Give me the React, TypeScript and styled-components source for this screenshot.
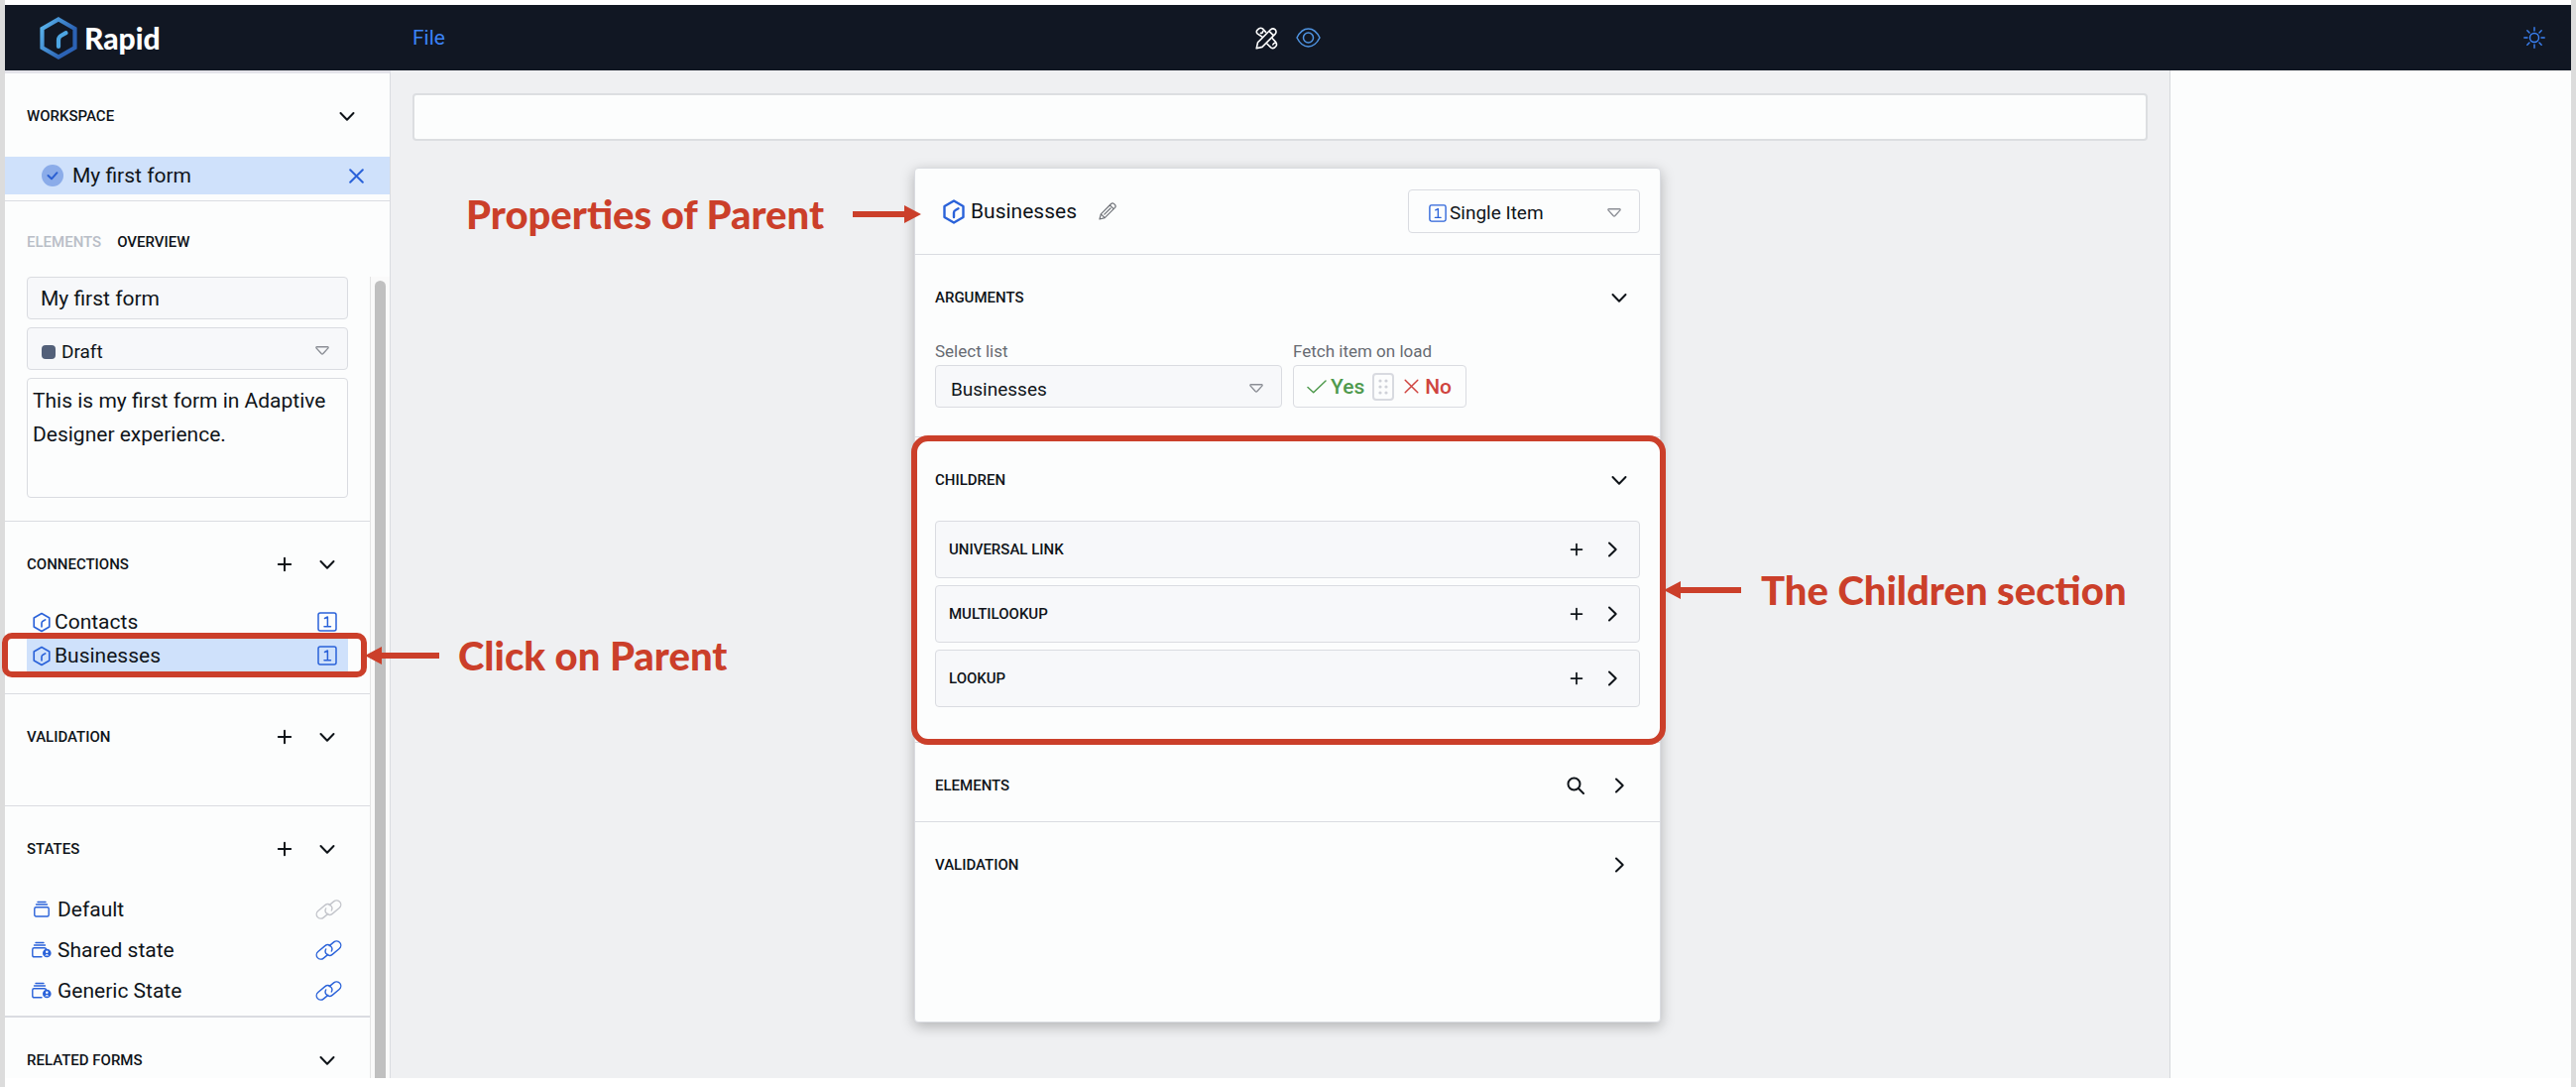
import React, { useId, useState } from 'react';
import styled, { createGlobalStyle } from 'styled-components';

const color = {
  ink: '#0f1419',
  muted: '#676b72',
  faint: '#b9bec7',
  line: '#dadce1',
  surface: '#fcfdfd',
  field: '#f7f8fa',
  canvas: '#eff0f2',
  selected: '#cfe1fb',
  blue: '#2a62d9',
  bar: '#111723',
  mark: '#cb3f2a',
  yes: '#4f9a4d',
  no: '#cf4440',
};

const GlobalStyle = createGlobalStyle`
  *, *::before, *::after { box-sizing: border-box; }
  body {
    margin: 0;
    color: ${color.ink};
    font-family: Roboto, "Liberation Sans", sans-serif;
    font-size: 21px;
    line-height: 34px;
  }
  button, input, select, textarea {
    font: inherit;
    color: inherit;
  }
`;

/* ---------- layout ---------- */

const Frame = styled.div`
  height: 100vh;
  display: flex;
  flex-direction: column;
  padding: 5px 5px 9px;
  overflow: hidden;
  background: #fff;
  box-shadow: inset 5px 0 #dcdcdc, inset -5px 0 #dcdcdc;
`;

const columns = '389px minmax(0, 1fr) 405px';

const TopBar = styled.header`
  flex: none;
  height: 66px;
  display: grid;
  grid-template-columns: ${columns};
  align-items: center;
  background: ${color.bar};
`;

const Brand = styled.a`
  display: flex;
  align-items: center;
  gap: 7px;
  padding-left: 35px;
  color: #fff;
  text-decoration: none;
  font: 900 30px/40px Lato, sans-serif;
`;

const BarCenter = styled.div`
  display: grid;
  grid-template-columns: 1fr auto 1fr;
  align-items: center;
  padding-left: 15px;
`;

const MenuButton = styled.button`
  justify-self: start;
  margin-left: 7px;
  padding: 0;
  border: 0;
  background: none;
  color: #3b82f6;
  cursor: pointer;
`;

const ModeSwitch = styled.div`
  display: flex;
  align-items: center;
  gap: 18px;
`;

const BarEnd = styled.div`
  display: flex;
  justify-content: flex-end;
  padding-right: 26px;
`;

const IconButton = styled.button<{ $tone?: string }>`
  display: inline-flex;
  align-items: center;
  justify-content: center;
  min-width: 16px;
  padding: 0;
  border: 0;
  background: none;
  color: ${p => p.$tone ?? color.ink};
  cursor: pointer;
`;

const Body = styled.div`
  flex: 1;
  min-height: 0;
  display: grid;
  grid-template-columns: ${columns};
`;

const Sidebar = styled.aside`
  position: relative;
  z-index: 2;
  min-height: 0;
  display: flex;
  flex-direction: column;
  background: ${color.surface};
  border-top: 3px solid #e4e4ea;
  border-right: 1px solid ${color.line};
`;

const SidebarScroll = styled.div`
  flex: 1;
  min-height: 0;
  display: flex;
`;

const SidebarContent = styled.div`
  flex: 1;
  min-width: 0;
`;

const Track = styled.div`
  width: 20px;
  padding: 4px 4px 0;
  background: #fafafa;
  border-left: 1px solid #e4e4e4;
`;

const Thumb = styled.div`
  width: 11px;
  height: 100%;
  border-radius: 6px 6px 0 0;
  background: #c0c0c0;
`;

const Canvas = styled.main`
  min-width: 0;
  display: flex;
  flex-direction: column;
  padding: 23px 22px 56px;
  background: ${color.canvas};
`;

const PathField = styled.input`
  flex: none;
  width: 100%;
  height: 48px;
  padding: 0 12px;
  background: ${color.surface};
  border: 2px solid #dcdee1;
  border-radius: 4px;
`;

const Stage = styled.div`
  flex: 1;
  display: flex;
  justify-content: center;
  padding: 27px 0 0 15px;
`;

const SidePanel = styled.aside`
  background: ${color.surface};
  border-left: 1px solid #d6d8dc;
`;

/* ---------- sections ---------- */

const Section = styled.section<{ $end?: number; $rule?: number }>`
  position: relative;
  padding-bottom: ${p => p.$end ?? 0}px;
  border-bottom: ${p => p.$rule ?? 1}px solid ${color.line};
`;

const SectionHead = styled.div<{ $card?: boolean; $compact?: boolean }>`
  display: flex;
  align-items: center;
  gap: 27px;
  height: ${p => (p.$compact ? 79 : 84)}px;
  padding: ${p => (p.$compact ? 7 : 1)}px ${p => (p.$card ? '33px 0 20px' : '35px 0 22px')};
`;

const Caption = styled.h2`
  flex: 1;
  margin: 0;
  font-size: 15px;
  line-height: 20px;
  font-weight: 500;
`;

const Tabs = styled.div`
  display: flex;
  align-items: center;
  gap: 16px;
  height: 76px;
  padding: 5px 22px 0;
`;

const Tab = styled.button<{ $active?: boolean }>`
  padding: 0;
  border: 0;
  background: none;
  font-size: 15px;
  line-height: 20px;
  font-weight: 500;
  color: ${p => (p.$active ? color.ink : color.faint)};
  cursor: pointer;
`;

const FormRow = styled.div`
  display: flex;
  align-items: center;
  gap: 9px;
  height: 38px;
  margin-bottom: 6px;
  padding: 0 26px 0 37px;
  background: ${color.selected};
`;

const Grow = styled.span`
  flex: 1;
`;

const Fields = styled.div`
  display: flex;
  flex-direction: column;
  gap: 8px;
  padding: 0 22px;
`;

const TextField = styled.input`
  width: 100%;
  height: 43px;
  padding: 0 13px;
  background: ${color.field};
  border: 1px solid ${color.line};
  border-radius: 4px;
`;

const TextArea = styled.textarea`
  display: block;
  width: 100%;
  height: 121px;
  padding: 5px;
  resize: none;
  overflow: hidden;
  background: ${color.surface};
  border: 1px solid ${color.line};
  border-radius: 4px;
`;

const List = styled.ul`
  margin: 0;
  padding: 0 22px;
  list-style: none;
`;

const ConnectionItem = styled.li<{ $selected?: boolean }>`
  position: relative;
  display: flex;
  align-items: center;
  gap: 4px;
  height: 34px;
  padding: 0 11px 0 6px;
  background: ${p => (p.$selected ? color.selected : 'none')};
`;

const StateItem = styled.li`
  display: flex;
  align-items: center;
  gap: 6px;
  height: 40px;
  margin-bottom: 1px;
  padding: 0 6px 0 5px;
`;

/* ---------- select ---------- */

const SelectShell = styled.div`
  display: grid;
  align-items: center;
  & > * { grid-area: 1 / 1; }
`;

const SelectControl = styled.select<{ $start: number; $plain?: boolean }>`
  appearance: none;
  width: 100%;
  height: ${p => (p.$plain ? 44 : 43)}px;
  padding: ${p => (p.$plain ? 4 : 7)}px 40px 0 ${p => p.$start}px;
  font-size: 19px;
  line-height: 28px;
  background: ${p => (p.$plain ? color.surface : color.field)};
  border: 1px solid ${color.line};
  border-radius: 4px;
`;

const Lead = styled.span`
  z-index: 1;
  display: flex;
  justify-self: start;
  padding: 6px 0 0 15px;
  pointer-events: none;
`;

const LeadWide = styled(Lead)`
  padding: 4px 0 0 21px;
`;

const Trail = styled.span`
  z-index: 1;
  display: flex;
  justify-self: end;
  padding: 3px 19px 0 0;
  pointer-events: none;
`;

const Swatch = styled.span`
  width: 14px;
  height: 14px;
  border-radius: 4px;
  background: #536079;
`;

/* ---------- card ---------- */

const Card = styled.section`
  position: relative;
  width: 100%;
  max-width: 753px;
  background: ${color.surface};
  border: 1px solid ${color.line};
  border-radius: 4px;
  box-shadow: 0 4px 14px rgba(0, 0, 0, 0.26);
`;

const CardHead = styled.header`
  position: relative;
  display: flex;
  align-items: center;
  gap: 22px;
  height: 87px;
  padding: 0 20px 0 28px;
  border-bottom: 1px solid ${color.line};
`;

const CardTitle = styled.h1`
  display: flex;
  align-items: center;
  gap: 6px;
  margin: 0;
  font-size: 21px;
  font-weight: 400;
`;

const TypePicker = styled.div`
  width: 234px;
  margin-left: auto;
`;

const ArgumentGrid = styled.div`
  display: grid;
  grid-template-columns: 350px 175px;
  gap: 11px;
  padding: 0 20px;
`;

const Label = styled.label`
  display: block;
  font-size: 17px;
  line-height: 27px;
  color: ${color.muted};
`;

const Toggle = styled.div`
  display: flex;
  align-items: center;
  height: 43px;
  padding: 0 13px;
  border: 1px solid ${color.line};
  border-radius: 4px;
`;

const Choice = styled.label<{ $tone: string; $gap: number }>`
  display: flex;
  align-items: center;
  gap: ${p => p.$gap}px;
  color: ${p => p.$tone};
  cursor: pointer;
`;

const ChoiceText = styled.span`
  font-weight: 500;
`;

const HiddenRadio = styled.input`
  appearance: none;
  width: 0;
  height: 0;
  margin: 0 -4px 0 0;
`;

const Handle = styled.span`
  display: flex;
  align-items: center;
  justify-content: center;
  width: 22px;
  height: 28px;
  margin: 0 8px;
  border: 2px solid #d8dae0;
  border-radius: 4px;
`;

const ChildList = styled.div`
  display: grid;
  gap: 7px;
  padding: 0 20px;
`;

const ChildRow = styled.div`
  display: flex;
  align-items: center;
  gap: 20px;
  height: 58px;
  padding: 0 19px 0 13px;
  background: ${color.field};
  border: 1px solid ${color.line};
  border-radius: 4px;
`;

/* ---------- annotations laid over the page ---------- */

const Outline = styled.div<{ $inset: string; $radius: number }>`
  position: absolute;
  z-index: 3;
  inset: ${p => p.$inset};
  border: 6px solid ${color.mark};
  border-radius: ${p => p.$radius}px;
  pointer-events: none;
`;

const Note = styled.div<{ $side: 'before' | 'after'; $edge: number; $top: string; $gap: number }>`
  position: absolute;
  z-index: 3;
  top: ${p => p.$top};
  ${p => (p.$side === 'before' ? 'right' : 'left')}: calc(100% + ${p => p.$edge}px);
  display: flex;
  align-items: center;
  gap: ${p => p.$gap}px;
  height: 48px;
  white-space: nowrap;
  color: ${color.mark};
  font: 900 40px/46px Lato, sans-serif;
  pointer-events: none;
`;

/* ---------- icons ---------- */

const Arrow = ({ length, left }: { length: number; left?: boolean }) => (
  <svg width={length} height="18" viewBox={`0 0 ${length} 18`} fill="currentColor" aria-hidden="true">
    {left ? (
      <path d={`M0 9 17 0V6H${length}V12H17V18Z`} />
    ) : (
      <path d={`M${length} 9 ${length - 17} 0V6H0V12H${length - 17}V18Z`} />
    )}
  </svg>
);

const stroke = (w: number) => ({
  fill: 'none',
  stroke: 'currentColor',
  strokeWidth: w,
  strokeLinecap: 'round' as const,
  strokeLinejoin: 'round' as const,
  'aria-hidden': true,
});

const ChevronDown = () => (
  <svg width="16" height="16" viewBox="0 0 16 16" {...stroke(2)}>
    <path d="M1.5 5 8 11.7 14.500 5" />
  </svg>
);
const ChevronRight = () => (
  <svg width="16" height="16" viewBox="0 0 16 16" {...stroke(2)}>
    <path d="M5 1.500 11.700 8 5 14.500" />
  </svg>
);
const Plus = ({ size = 16 }: { size?: number }) => (
  <svg width={size} height={size} viewBox="0 0 16 16" {...stroke(2)}>
    <path d="M8 1.800V14.200M1.800 8H14.200" />
  </svg>
);
const Search = () => (
  <svg width="18" height="18" viewBox="0 0 18 18" {...stroke(2)}>
    <circle cx="7.500" cy="7.500" r="6" />
    <path d="M12 12 17 17" />
  </svg>
);
const Close = ({ w = 2 }: { w?: number }) => (
  <svg width="15" height="15" viewBox="0 0 15 15" {...stroke(w)}>
    <path d="M1.200 1.200 13.800 13.800M13.800 1.200 1.200 13.800" />
  </svg>
);
const CheckLine = () => (
  <svg width="20" height="14" viewBox="0 0 20 14" {...stroke(1.5)}>
    <path d="M1 7.500 6.700 12.800 19 1" />
  </svg>
);
const CheckCircle = () => (
  <svg width="22" height="22" viewBox="0 0 22 22" aria-hidden="true">
    <circle cx="11" cy="11" r="11" fill="#8bace9" />
    <path d="M6.500 11 10 14.300 15.500 8.200" {...stroke(2)} stroke="#2a5fd2" />
  </svg>
);
const Caret = () => (
  <svg width="14" height="9" viewBox="0 0 14 9" {...stroke(1.4)} stroke="#8b8e95">
    <path d="M1.700 .8H12.300Q13.600 1 12.800 2.100L7.900 7.500Q7 8.400 6.100 7.500L1.200 2.100Q.4 1 1.700 .8Z" />
  </svg>
);
const HexMark = ({ size, w = 2.4 }: { size: number; w?: number }) => (
  <svg width={size} height={Math.round(size * 1.14)} viewBox="0 0 22 25" {...stroke(w)} stroke={color.blue}>
    <path d="M11 1.500 20.500 7V18L11 23.500 1.500 18V7Z" />
    <path d="M11 18V13.500Q11 11.800 12.500 11L15.500 9.300" />
  </svg>
);
const BrandMark = () => (
  <svg width="38" height="43" viewBox="0 0 38 43" aria-hidden="true">
    <defs>
      <linearGradient id="brand" x1="0" y1="0" x2="1" y2="0.600">
        <stop offset="0" stopColor="#5cb8ee" />
        <stop offset="0.850" stopColor="#2b62b4" />
      </linearGradient>
    </defs>
    <path d="M19 2.500 35.500 12V31L19 40.500 2.500 31V12Z" fill="none" stroke="url(#brand)" strokeWidth="4.200" />
    <path d="M19 30V23.500Q19 20.500 21.500 19L26.500 16.200" fill="none" stroke="#4da6e3" strokeWidth="4.200" strokeLinecap="round" />
  </svg>
);
const OneBox = ({ size }: { size: number }) => (
  <svg width={size} height={size} viewBox="0 0 20 20" {...stroke(1.5)} stroke={color.blue}>
    <rect x="1" y="1" width="18" height="18" rx="2" />
    <path d="M7.500 6.500 10.400 5V14.800M7 14.800H13.500" />
  </svg>
);
const DesignTools = () => (
  <svg width="23" height="23" viewBox="0 0 23 23" {...stroke(1.6)}>
    <path d="M1.200 21.800 2.500 15.800 15.500 2.800Q17.800 .8 20.100 2.800 22 5.100 20 7.400L7 20.400ZM14 4.400 18.500 8.900" />
    <path d="M7 10.200 2 6.800Q.6 5 2 3.300L3.600 1.900Q5.500 .6 7.400 1.900L10.600 5.400M5.500 6.400Q7.600 6.600 7.600 4.600" />
    <path d="M17.300 11.800 20.800 15.600Q22.200 17.600 20.900 19.500L19.500 21Q17.600 22.300 15.700 20.900L12 17.200M21 16.400Q18.800 15.900 17.800 18" />
  </svg>
);
const Eye = () => (
  <svg width="25" height="20" viewBox="0 0 25 20" {...stroke(1.5)} stroke="#4f94e2">
    <path d="M1 10Q5.500 1 12.500 1T24 10Q19.500 19 12.500 19T1 10Z" />
    <circle cx="12.500" cy="10" r="5" />
  </svg>
);
const Sun = () => (
  <svg width="22" height="22" viewBox="0 0 22 22" {...stroke(1.4)}>
    <circle cx="11" cy="11" r="4.500" />
    <path d="M11 .8V4M11 18V21.200M.8 11H4M18 11H21.200M3.800 3.800 6 6M16 16 18.200 18.200M18.200 3.800 16 6M6 16 3.800 18.200" />
  </svg>
);
const Pencil = () => (
  <svg width="18" height="18" viewBox="0 0 18 18" {...stroke(1.2)}>
    <path d="M1 17 2.300 11.800 12.600 1.500Q14 .3 15.400 1.400L16.600 2.600Q17.700 4 16.500 5.400L6.200 15.700ZM2.300 11.800 6.200 15.700M11.300 2.800 15.200 6.700M5.800 12.200 12 6" />
  </svg>
);
const Grip = () => (
  <svg width="10" height="16" viewBox="0 0 10 16" fill="#cfd1d8" aria-hidden="true">
    {[2, 8, 14].map(y => (
      <g key={y}>
        <circle cx="2" cy={y} r="1.600" />
        <circle cx="8" cy={y} r="1.600" />
      </g>
    ))}
  </svg>
);
const StackIcon = ({ shared }: { shared?: boolean }) => (
  <svg width="20" height="18" viewBox="0 0 20 18" {...stroke(1.4)} stroke={color.blue}>
    {shared ? (
      <>
        <path d="M4 1.500H12M2.500 4H13.500M10 15.800H2.300Q.8 15.800 .8 14.300V8.300Q.8 6.800 2.300 6.800H13Q14.200 6.800 14.500 7.800" />
        <circle cx="15.300" cy="12" r="4.300" fill={color.blue} stroke="none" />
        <circle cx="15.300" cy="10.800" r="1.300" fill="#fff" stroke="none" />
        <path d="M13.200 14.500Q15.300 11.500 17.400 14.500Z" fill="#fff" stroke="none" />
      </>
    ) : (
      <>
        <path d="M6 1.500H14M4.500 4H15.500" />
        <rect x="2.800" y="6.800" width="14.400" height="9.200" rx="1.500" />
      </>
    )}
  </svg>
);
const ChainIcon = () => (
  <svg width="27" height="20" viewBox="0 0 27 20" {...stroke(1.4)}>
    <g transform="translate(13.500 10) rotate(-40)">
      <path d="M-3.300 2.900H-9.200A4.300 4.300 0 0 1 -9.200 -5.700H0A4.300 4.300 0 0 1 1.500 2.600" />
      <path d="M3.300 -2.900H9.200A4.300 4.300 0 0 1 9.200 5.700H0A4.300 4.300 0 0 1 -1.500 -2.600" />
    </g>
  </svg>
);

/* ---------- parts ---------- */

type HeadProps = {
  title: string;
  open?: boolean;
  add?: boolean;
  search?: boolean;
  card?: boolean;
  compact?: boolean;
};

const Head = ({ title, open, add, search, card, compact }: HeadProps) => (
  <SectionHead $card={card} $compact={compact}>
    <Caption>{title}</Caption>
    {add && <IconButton aria-label={`Add to ${title}`}><Plus /></IconButton>}
    {search && <IconButton aria-label={`Search ${title}`}><Search /></IconButton>}
    <IconButton aria-label={`Toggle ${title}`} aria-expanded={!!open}>
      {open ? <ChevronDown /> : <ChevronRight />}
    </IconButton>
  </SectionHead>
);

const states = [
  { name: 'Default', shared: false },
  { name: 'Shared state', shared: true },
  { name: 'Generic State', shared: true },
];

const SidebarView = () => (
  <Sidebar>
    <Section>
      <Head title="WORKSPACE" open />
      <FormRow>
        <CheckCircle />
        <Grow>My first form</Grow>
        <IconButton $tone={color.blue} aria-label="Close My first form"><Close /></IconButton>
      </FormRow>
    </Section>
    <Tabs>
      <Tab>ELEMENTS</Tab>
      <Tab $active>OVERVIEW</Tab>
    </Tabs>
    <SidebarScroll>
      <SidebarContent>
        <Section $end={23}>
          <Fields>
            <TextField aria-label="Form name" defaultValue="My first form" />
            <SelectShell>
              <SelectControl $start={34} aria-label="Form status">
                <option>Draft</option>
              </SelectControl>
              <Lead><Swatch /></Lead>
              <Trail><Caret /></Trail>
            </SelectShell>
            <TextArea
              aria-label="Form description"
              defaultValue="This is my first form in Adaptive Designer experience."
            />
          </Fields>
        </Section>
        <Section $end={21}>
          <Head title="CONNECTIONS" open add />
          <List>
            <ConnectionItem>
              <HexMark size={18} w={2} />
              <Grow>Contacts</Grow>
              <OneBox size={20} />
            </ConnectionItem>
            <ConnectionItem $selected>
              <HexMark size={18} w={2} />
              <Grow>Businesses</Grow>
              <OneBox size={20} />
              <Outline $inset="-6px -19px -5px -25px" $radius={10} />
              <Note $side="after" $edge={17} $top="-7px" $gap={19}>
                <Arrow length={75} left />
                Click on Parent
              </Note>
            </ConnectionItem>
          </List>
        </Section>
        <Section $end={28}>
          <Head title="VALIDATION" open add />
        </Section>
        <Section $end={4} $rule={2}>
          <Head title="STATES" open add />
          <List>
            {states.map(s => (
              <StateItem key={s.name}>
                <StackIcon shared={s.shared} />
                <Grow>{s.name}</Grow>
                <IconButton $tone={s.shared ? color.blue : '#c3c5cb'} aria-label={`Link ${s.name}`}>
                  <ChainIcon />
                </IconButton>
              </StateItem>
            ))}
          </List>
        </Section>
        <Head title="RELATED FORMS" open />
      </SidebarContent>
      <Track><Thumb /></Track>
    </SidebarScroll>
  </Sidebar>
);

const FetchToggle = () => {
  const [fetch, setFetch] = useState(true);
  return (
    <Toggle role="radiogroup" aria-label="Fetch item on load">
      <Choice $tone={color.yes} $gap={4}>
        <HiddenRadio type="radio" name="fetch" checked={fetch} onChange={() => setFetch(true)} />
        <CheckLine />
        <ChoiceText>Yes</ChoiceText>
      </Choice>
      <Handle><Grip /></Handle>
      <Choice $tone={color.no} $gap={6}>
        <HiddenRadio type="radio" name="fetch" checked={!fetch} onChange={() => setFetch(false)} />
        <Close w={1.5} />
        <ChoiceText>No</ChoiceText>
      </Choice>
    </Toggle>
  );
};

const PropertiesCard = () => {
  const listId = useId();
  return (
    <Card>
      <CardHead>
        <CardTitle>
          <HexMark size={22} />
          Businesses
        </CardTitle>
        <IconButton $tone="#6f7278" aria-label="Rename"><Pencil /></IconButton>
        <TypePicker>
          <SelectShell>
            <SelectControl $start={41} $plain aria-label="Item type">
              <option>Single Item</option>
            </SelectControl>
            <LeadWide><OneBox size={18} /></LeadWide>
            <Trail><Caret /></Trail>
          </SelectShell>
        </TypePicker>
        <Note $side="before" $edge={-6} $top="22px" $gap={29}>
          Properties of Parent
          <Arrow length={69} />
        </Note>
      </CardHead>
      <Section $end={29}>
        <Head title="ARGUMENTS" open card />
        <ArgumentGrid>
          <div>
            <Label htmlFor={listId}>Select list</Label>
            <SelectShell>
              <SelectControl id={listId} $start={15}>
                <option>Businesses</option>
              </SelectControl>
              <Trail><Caret /></Trail>
            </SelectShell>
          </div>
          <div>
            <Label as="span">Fetch item on load</Label>
            <FetchToggle />
          </div>
        </ArgumentGrid>
      </Section>
      <Section $end={35}>
        <Head title="CHILDREN" open card />
        <ChildList>
          {['UNIVERSAL LINK', 'MULTILOOKUP', 'LOOKUP'].map(name => (
            <ChildRow key={name}>
              <Caption as="h3">{name}</Caption>
              <IconButton aria-label={`Add ${name}`}><Plus size={14} /></IconButton>
              <IconButton aria-label={`Open ${name}`}><ChevronRight /></IconButton>
            </ChildRow>
          ))}
        </ChildList>
        <Outline $inset="-2px -6px -3px -4px" $radius={17} />
        <Note $side="after" $edge={4} $top="130px" $gap={20}>
          <Arrow length={78} left />
          The Children section
        </Note>
      </Section>
      <Section>
        <Head title="ELEMENTS" search card compact />
      </Section>
      <Head title="VALIDATION" card />
    </Card>
  );
};

export default function App() {
  return (
    <>
      <GlobalStyle />
      <Frame>
        <TopBar>
          <Brand href="#"><BrandMark />Rapid</Brand>
          <BarCenter>
            <MenuButton>File</MenuButton>
            <ModeSwitch>
              <IconButton $tone="#fff" aria-label="Design"><DesignTools /></IconButton>
              <IconButton aria-label="Preview"><Eye /></IconButton>
            </ModeSwitch>
          </BarCenter>
          <BarEnd>
            <IconButton $tone="#3b82f6" aria-label="Toggle theme"><Sun /></IconButton>
          </BarEnd>
        </TopBar>
        <Body>
          <SidebarView />
          <Canvas>
            <PathField aria-label="Canvas path" />
            <Stage><PropertiesCard /></Stage>
          </Canvas>
          <SidePanel />
        </Body>
      </Frame>
    </>
  );
}
